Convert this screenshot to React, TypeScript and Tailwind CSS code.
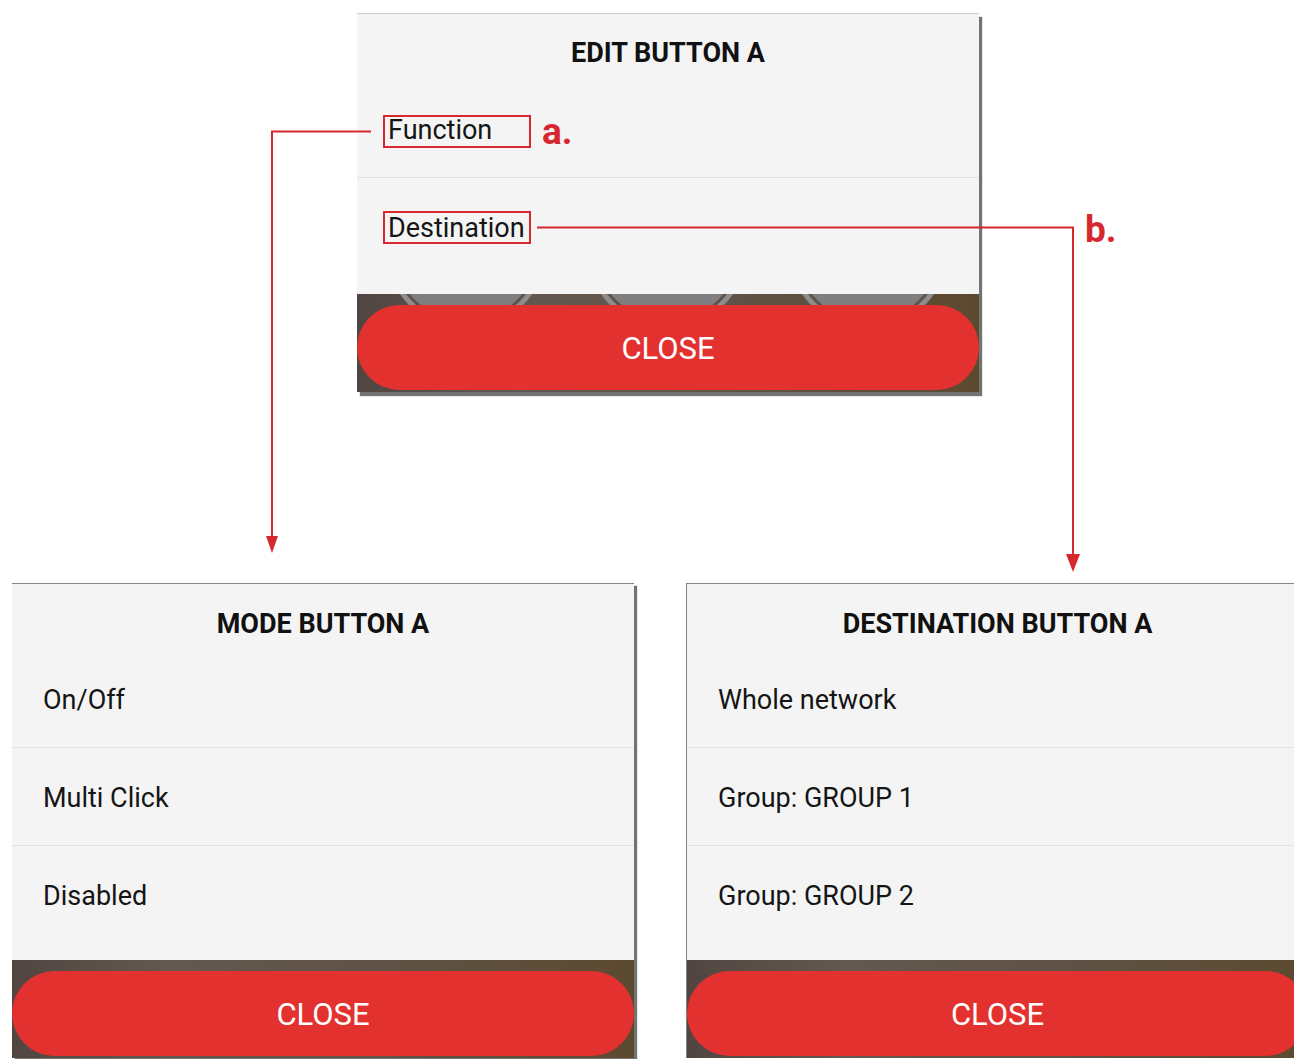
import React from "react";

const RED = "#d7282f";

function Footer({ circles }: { circles?: boolean }) {
  return (
    <div className="relative h-[98px] pt-[11px] bg-[linear-gradient(90deg,#514541_0%,#635850_25%,#5f5246_60%,#5c4a2f_100%)]">
      {circles && (
        <svg className="absolute left-0 top-0" width="622" height="40" viewBox="0 0 622 40">
          {[109, 310, 511].map((cx) => (
            <g key={cx}>
              <circle cx={cx} cy={-45} r={80} fill="#8d8d8d" />
              <circle cx={cx} cy={-45} r={75} fill="#5f5249" />
              <circle cx={cx} cy={-45} r={72} fill="#7f7f7f" />
            </g>
          ))}
        </svg>
      )}
      <div className="relative flex h-[85px] w-full items-center justify-center rounded-full bg-[#e3312f] pt-[3px] text-[31px] text-white">
        CLOSE
      </div>
    </div>
  );
}

function Dialog({
  title,
  items,
  circles,
  className,
  padBottom,
  titlePad,
}: {
  title: string;
  items: string[];
  circles?: boolean;
  className: string;
  padBottom: string;
  titlePad: string;
}) {
  return (
    <div className={"w-[622px] shrink-0 bg-[#f4f4f4] " + className}>
      <div className={"h-[66px] text-center text-[27px] font-bold leading-[32px] text-[#111] " + titlePad}>
        {title}
      </div>
      {items.map((it, i) => (
        <div
          key={it}
          className={
            "flex h-[98px] items-center pt-[3px] px-[31px] text-[27px] text-[#151515] " +
            (i < items.length - 1 ? "border-b border-[#e2e2e2]" : "")
          }
        >
          {it}
        </div>
      ))}
      <div className={padBottom} />
      <Footer circles={circles} />
    </div>
  );
}

export default function App() {
  return (
    <div className="relative h-[1059px] w-[1294px] overflow-hidden bg-white font-['Roboto','Liberation_Sans',sans-serif]">
      <div className="pl-[357px] pt-[13px]">
        <Dialog
          title="EDIT BUTTON A"
          items={["Function", "Destination"]}
          circles
          titlePad="pt-[23px]"
          padBottom="h-[18px]"
          className="border-t border-[#d2c9c0] shadow-[3px_4px_1px_rgba(0,0,0,0.55)]"
        />
      </div>
      <div className="mt-[191px] flex gap-[52px] pl-[12px]">
        <Dialog
          title="MODE BUTTON A"
          items={["On/Off", "Multi Click", "Disabled"]}
          titlePad="pt-[24px]"
          padBottom="h-[16px]"
          className="border-t border-[#8c8279] shadow-[3px_3px_1px_rgba(0,0,0,0.55)]"
        />
        <Dialog
          title="DESTINATION BUTTON A"
          items={["Whole network", "Group: GROUP 1", "Group: GROUP 2"]}
          titlePad="pt-[24px]"
          padBottom="h-[16px]"
          className="border-t border-l border-[#8c8279]"
        />
      </div>

      <svg
        className="pointer-events-none absolute left-0 top-0"
        width="1294"
        height="1059"
        viewBox="0 0 1294 1059"
      >
        <path d="M371 131.5 H272 V540" stroke={RED} strokeWidth="2" fill="none" />
        <polygon points="266,536 278,536 272,553" fill={RED} />
        <path d="M537 227.5 H1073 V556" stroke={RED} strokeWidth="2" fill="none" />
        <polygon points="1066,554 1080,554 1073,572" fill={RED} />
        <rect x="384" y="116" width="146" height="31" stroke={RED} strokeWidth="2" fill="none" />
        <rect x="384" y="212" width="146" height="31" stroke={RED} strokeWidth="2" fill="none" />
      </svg>
      <div className="absolute left-[542px] top-[113px] text-[37px] font-bold leading-[37px] text-[#d7282f]">
        a.
      </div>
      <div className="absolute left-[1085px] top-[211px] text-[37px] font-bold leading-[37px] text-[#d7282f]">
        b.
      </div>
    </div>
  );
}
